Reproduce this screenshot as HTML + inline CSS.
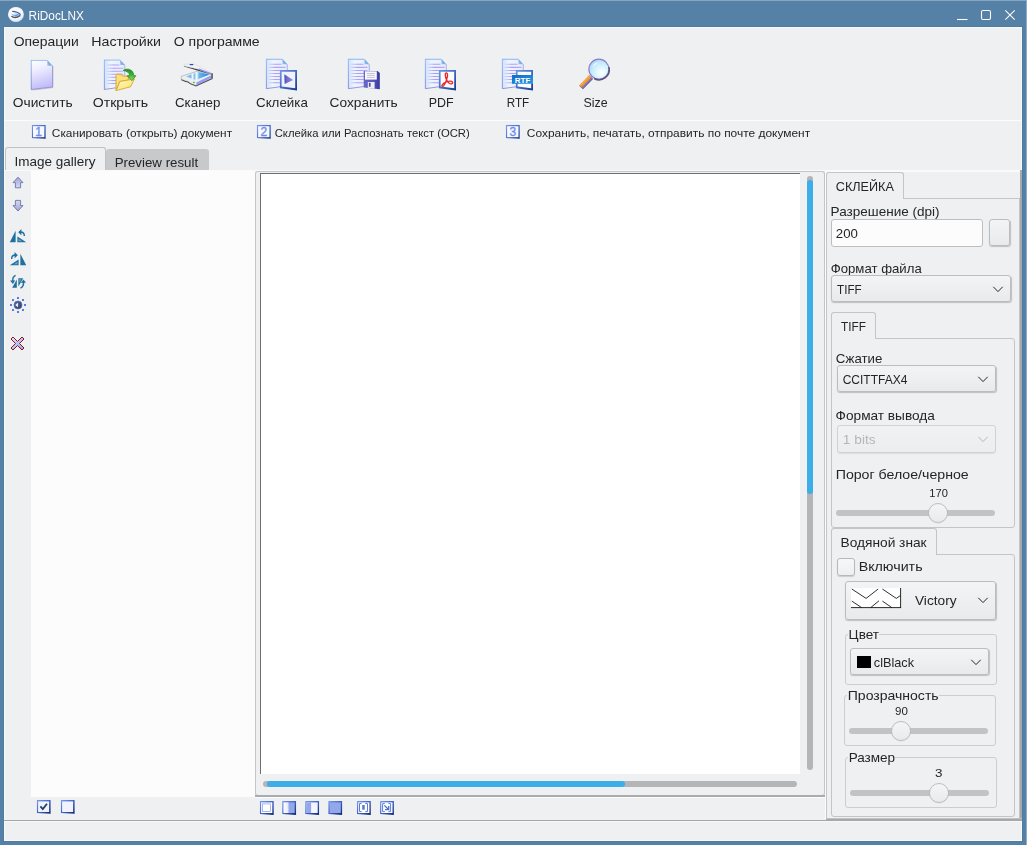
<!DOCTYPE html>
<html lang="ru">
<head>
<meta charset="utf-8">
<title>RiDocLNX</title>
<style>
*{box-sizing:border-box;margin:0;padding:0}
html,body{width:1027px;height:845px;overflow:hidden}
body{position:relative;background:#5581a6;font-family:"Liberation Sans","DejaVu Sans",sans-serif;color:#232627}
.a{position:absolute}
.t{position:absolute;white-space:nowrap;line-height:16px;height:16px;transform-origin:0 50%;color:#232627}
.m{font-size:13.33px}
.s{font-size:11px}
.bg{background:#eff0f1}
.fr{position:absolute;border:1px solid #c3c5c7;border-radius:3px}
.gb{position:absolute;border:1px solid #cbcdcf;border-radius:3px}
.cb{position:absolute;border:1px solid #bbbdbf;border-radius:3px;background:linear-gradient(#f3f4f5,#e9eaeb);box-shadow:.5px 1px 1px rgba(0,0,0,.2)}
.cb.dis{border-color:#d0d2d3;box-shadow:0 1px 1px rgba(0,0,0,.08);background:linear-gradient(#f1f2f3,#ecedee)}
.gr{position:absolute;height:6px;border-radius:3px;background:#c2c3c4}
.hd{position:absolute;width:20px;height:20px;border-radius:50%;border:1px solid #bcbec0;background:linear-gradient(#f4f5f6,#e9eaeb);box-shadow:0 .5px 1px rgba(0,0,0,.08)}
svg{position:absolute;overflow:visible}
</style>
</head>
<body>
<!-- window chrome -->
<div class="a" style="left:0;top:0;width:1027px;height:1px;background:#86a5c1"></div>
<div class="a" style="left:1026px;top:0;width:1px;height:845px;background:#8fadc7"></div>
<div class="a bg" style="left:4px;top:27px;width:1018px;height:814px;border:1px solid #f8f8f9;box-shadow:0 0 0 1px #4f7ca1"></div>
<!-- title buttons -->
<svg style="left:950px;top:4px" width="72" height="20" viewBox="950 4 72 20" fill="none" stroke="#fcfcfc" stroke-width="1.1">
<path d="M957 19.5H967.5"/>
<rect x="981.5" y="10.5" width="9" height="9" rx="1.5"/>
<path d="M1005.3 10.3L1014.7 19.7M1014.7 10.3L1005.3 19.7"/>
</svg>
<!-- separator under toolbar -->
<div class="a" style="left:4px;top:120px;width:1018px;height:1px;background:#fcfcfc"></div>
<!-- white line under tabs -->
<div class="a" style="left:4px;top:170px;width:1016px;height:1px;background:#fafafa"></div>
<div class="a" style="left:825px;top:171px;width:195px;height:1px;background:#fafafa"></div>
<!-- left tabs -->
<div class="a" style="left:106px;top:149px;width:103px;height:21px;background:#c8c9ca;border-radius:3px 3px 0 0"></div>
<div class="a bg" style="left:5px;top:147px;width:101px;height:23px;border:1px solid #c0c2c4;border-bottom:none;border-radius:3px 3px 0 0"></div>
<!-- gallery -->
<div class="a" style="left:31px;top:171px;width:224px;height:626px;background:#fcfcfc"></div>
<!-- viewer frame -->
<div class="a" style="left:255px;top:795px;width:570px;height:2px;background:#a9acaf"></div>
<div class="a" style="left:255px;top:797px;width:570px;height:1px;background:#fcfcfc"></div>
<div class="fr bg" style="left:255px;top:171px;width:570px;height:625px;border-bottom-color:#a9acaf"></div>
<div class="a" style="left:260px;top:173px;width:540px;height:601px;background:#fff;border-left:1px solid #6e6e6e;border-top:1px solid #6e6e6e"></div>
<!-- scrollbars -->
<div class="a" style="left:807px;top:176px;width:6px;height:594px;border-radius:3px;background:#b4b5b6"></div>
<div class="a" style="left:807px;top:180px;width:6px;height:314px;border-radius:3px;background:#3daee9"></div>
<div class="a" style="left:263px;top:781px;width:534px;height:6px;border-radius:3px;background:#b4b5b6"></div>
<div class="a" style="left:267px;top:781px;width:358px;height:6px;border-radius:3px;background:#3daee9"></div>
<!-- splitter + status bar -->
<div class="a" style="left:825px;top:171px;width:1px;height:648px;background:#fcfcfc"></div>
<div class="a" style="left:4px;top:820px;width:822px;height:1px;background:#a3a6a9"></div>
<div class="a" style="left:4px;top:821px;width:1018px;height:1px;background:#f8f8f9"></div>
<!-- right panel outer tab widget -->
<div class="a" style="left:826px;top:198px;width:196px;height:623px;border-left:1px solid #c3c5c7;border-top:1px solid #c3c5c7;border-radius:0 0 0 3px"></div>
<div class="a bg" style="left:826px;top:172px;width:78px;height:27px;border:1px solid #c3c5c7;border-bottom:none;border-radius:3px 3px 0 0"></div>
<div class="a" style="left:1019px;top:198px;width:1px;height:621px;background:#c3c5c7"></div>
<div class="a" style="left:1020px;top:170px;width:2px;height:651px;background:#a6a8ac"></div>
<div class="a" style="left:827px;top:818px;width:195px;height:1px;background:#c0c2c5"></div>
<div class="a" style="left:826px;top:819px;width:196px;height:2px;background:#a6a8ac"></div>
<!-- resolution -->
<div class="a" style="left:831px;top:219px;width:152px;height:28px;border:1px solid #bcbec0;border-radius:3px;background:#fcfcfc"></div>
<div class="cb" style="left:989px;top:219px;width:21px;height:27px"></div>
<!-- format combobox -->
<div class="cb" style="left:831px;top:275px;width:180px;height:27px"></div>
<svg style="left:993px;top:286px" width="10" height="7" viewBox="0 0 10 7" fill="none" stroke="#232627" stroke-width="1"><path d="M0.3 0.8L5 5.6L9.7 0.8"/></svg>
<!-- TIFF tab + pane -->
<div class="fr" style="left:831px;top:338px;width:184px;height:190px;border-radius:0 3px 3px 3px"></div>
<div class="a bg" style="left:831px;top:312px;width:45px;height:27px;border:1px solid #c3c5c7;border-bottom:none;border-radius:3px 3px 0 0"></div>
<div class="cb" style="left:837px;top:365px;width:159px;height:27px"></div>
<svg style="left:978px;top:376px" width="10" height="7" viewBox="0 0 10 7" fill="none" stroke="#232627" stroke-width="1"><path d="M0.3 0.8L5 5.6L9.7 0.8"/></svg>
<div class="cb dis" style="left:837px;top:425px;width:159px;height:28px"></div>
<svg style="left:978px;top:436px" width="10" height="7" viewBox="0 0 10 7" fill="none" stroke="#b4b6b7" stroke-width="1"><path d="M0.3 0.8L5 5.6L9.7 0.8"/></svg>
<div class="gr" style="left:836px;top:510px;width:159px"></div>
<div class="hd" style="left:928px;top:503px"></div>
<!-- watermark tab + pane -->
<div class="fr" style="left:831px;top:554px;width:184px;height:263px;border-radius:0 3px 3px 3px"></div>
<div class="a bg" style="left:831px;top:528px;width:106px;height:27px;border:1px solid #c3c5c7;border-bottom:none;border-radius:3px 3px 0 0"></div>
<div class="a" style="left:837px;top:558px;width:18px;height:18px;border:1px solid #b6b8ba;border-radius:3px;background:linear-gradient(#f6f7f7,#eeeff0);box-shadow:0 1px 1px rgba(0,0,0,.15)"></div>
<div class="cb" style="left:845px;top:581px;width:151px;height:39px"></div>
<svg style="left:851px;top:588px" width="51" height="20" viewBox="0 0 51 20"><rect x="0" y="0" width="50" height="19.8" fill="#fff"/><path d="M.8 1L15.1 10.4L27.2 1M.8 13.1L10.6 19.6M19.7 19.6L28 12.8M31.4 1L45.3 10.4L49.2 7.7M31.4 13.1L40.8 19.6" fill="none" stroke="#1a1a1a" stroke-width="0.9"/><path d="M49.6 0V20M0 19.6H50" fill="none" stroke="#111" stroke-width="0.9"/></svg>
<svg style="left:978px;top:597px" width="10" height="7" viewBox="0 0 10 7" fill="none" stroke="#232627" stroke-width="1"><path d="M0.3 0.8L5 5.6L9.7 0.8"/></svg>
<!-- colour group -->
<div class="gb" style="left:845px;top:634px;width:152px;height:51px"></div>
<div class="a bg" style="left:848px;top:630px;width:31px;height:10px"></div>
<div class="cb" style="left:850px;top:648px;width:139px;height:27px"></div>
<div class="a" style="left:857px;top:656px;width:14px;height:12px;background:#000"></div>
<svg style="left:971px;top:659px" width="10" height="7" viewBox="0 0 10 7" fill="none" stroke="#232627" stroke-width="1"><path d="M0.3 0.8L5 5.6L9.7 0.8"/></svg>
<!-- transparency group -->
<div class="gb" style="left:844px;top:695px;width:152px;height:51px"></div>
<div class="a bg" style="left:847px;top:691px;width:92px;height:10px"></div>
<div class="gr" style="left:849px;top:728px;width:139px"></div>
<div class="hd" style="left:891px;top:721px"></div>
<!-- size group -->
<div class="gb" style="left:845px;top:757px;width:152px;height:51px"></div>
<div class="a bg" style="left:848px;top:753px;width:47px;height:10px"></div>
<div class="gr" style="left:850px;top:790px;width:139px"></div>
<div class="hd" style="left:929px;top:783px"></div>
<!-- icon overlay (page coordinates) -->
<svg style="left:0;top:0" width="1027" height="845" viewBox="0 0 1027 845">
<defs>
<linearGradient id="gDoc" x1="0" y1="0" x2=".25" y2="1"><stop offset="0" stop-color="#ffffff"/><stop offset=".35" stop-color="#efeefe"/><stop offset="1" stop-color="#c2bdfa"/></linearGradient>
<linearGradient id="gEdge" x1="0" y1="0" x2="0" y2="1"><stop offset="0" stop-color="#8db6f2"/><stop offset="1" stop-color="#7a84d6"/></linearGradient>
<linearGradient id="gLine" gradientUnits="userSpaceOnUse" x1="2" y1="0" x2="20" y2="0"><stop offset="0" stop-color="#dde3ff"/><stop offset=".45" stop-color="#ab9cf8"/><stop offset="1" stop-color="#b8acf9"/></linearGradient>
<linearGradient id="gDocL" x1="0" y1="0" x2="1" y2="0"><stop offset="0" stop-color="#cfe2fc"/><stop offset=".3" stop-color="#eef5ff"/><stop offset="1" stop-color="#e6ebfd"/></linearGradient>
<linearGradient id="gFold" x1="0" y1="1" x2="1" y2="0"><stop offset="0" stop-color="#9cc6f2"/><stop offset="1" stop-color="#3f86d8"/></linearGradient>
<linearGradient id="gFolder" x1="0" y1="0" x2="1" y2="1"><stop offset="0" stop-color="#fff8c8"/><stop offset=".6" stop-color="#fdea8c"/><stop offset="1" stop-color="#f6cf55"/></linearGradient>
<linearGradient id="gGreen" x1="0" y1="0" x2="0" y2="1"><stop offset="0" stop-color="#23902a"/><stop offset=".5" stop-color="#3fb23a"/><stop offset="1" stop-color="#8dea6a"/></linearGradient>
<linearGradient id="gBox" x1="0" y1="0" x2="1" y2="1"><stop offset="0" stop-color="#f4f6ff"/><stop offset="1" stop-color="#c9d2f5"/></linearGradient>
<linearGradient id="gFlop" x1="0" y1="0" x2="1" y2="0"><stop offset="0" stop-color="#6a6acc"/><stop offset=".6" stop-color="#5555bb"/><stop offset="1" stop-color="#36369c"/></linearGradient>
<linearGradient id="gRtf" x1="0" y1="0" x2="1" y2="1"><stop offset="0" stop-color="#0f6cc4"/><stop offset="1" stop-color="#2a9ade"/></linearGradient>
<linearGradient id="gPlay" x1="0" y1="0" x2="1" y2="0"><stop offset="0" stop-color="#4848a8"/><stop offset=".35" stop-color="#6f6fd6"/><stop offset="1" stop-color="#8d8de6"/></linearGradient>
<linearGradient id="gBtn2" x1="0" y1="0" x2="1" y2="1"><stop offset="0" stop-color="#6d98e2"/><stop offset=".5" stop-color="#3f6cc4"/><stop offset="1" stop-color="#17388a"/></linearGradient>
<radialGradient id="gGlass" cx=".64" cy=".68" r=".75"><stop offset="0" stop-color="#ffffff"/><stop offset=".3" stop-color="#e4f9ff"/><stop offset=".7" stop-color="#c4e8fd"/><stop offset="1" stop-color="#a4d2f8"/></radialGradient>
<linearGradient id="gScan" x1="0" y1="0" x2="1" y2="0"><stop offset="0" stop-color="#9fd0f6"/><stop offset=".2" stop-color="#6fb8f0"/><stop offset=".28" stop-color="#f4faff"/><stop offset=".36" stop-color="#7cc0f2"/><stop offset=".46" stop-color="#ffffff"/><stop offset=".56" stop-color="#6ab6f0"/><stop offset="1" stop-color="#1a84e0"/></linearGradient>
<linearGradient id="gBtn" x1="0" y1="0" x2="1" y2="1"><stop offset="0" stop-color="#7d9cec"/><stop offset=".45" stop-color="#4468cc"/><stop offset="1" stop-color="#0e2870"/></linearGradient>
<linearGradient id="gArr" x1="0" y1="0" x2="0" y2="1"><stop offset="0" stop-color="#9ea4da"/><stop offset="1" stop-color="#d6d9f3"/></linearGradient>
<linearGradient id="gArr2" x1="0" y1="0" x2="0" y2="1"><stop offset="0" stop-color="#d6d9f3"/><stop offset="1" stop-color="#9ea4da"/></linearGradient>
<linearGradient id="gX" x1="0" y1="0" x2="1" y2="1"><stop offset="0" stop-color="#e8ebff"/><stop offset="1" stop-color="#8f9df0"/></linearGradient>
<linearGradient id="gHalfL" x1="0" y1="0" x2="1" y2="0"><stop offset="0" stop-color="#ffffff"/><stop offset="1" stop-color="#e4e8fb"/></linearGradient>
<radialGradient id="gSun" cx=".4" cy=".4" r=".7"><stop offset="0" stop-color="#6272a2"/><stop offset="1" stop-color="#2b3358"/></radialGradient>
<radialGradient id="gBall" cx=".45" cy=".35" r=".75"><stop offset="0" stop-color="#ffffff"/><stop offset=".6" stop-color="#f2f8ff"/><stop offset=".85" stop-color="#cfe2fb"/><stop offset="1" stop-color="#b9c6da"/></radialGradient>
<symbol id="docB" viewBox="0 0 23 31" preserveAspectRatio="none">
 <path d="M22.6 6.4V27.9L1 30.6" fill="none" stroke="#9a9aa6" stroke-width="1" opacity=".55"/>
 <path d="M.6 .5H16.9L22.1 5.9V27.3L.6 29.9Z" fill="url(#gDoc)"/>
 <path d="M.6 29.9V.5H16.9" fill="none" stroke="url(#gEdge)" stroke-width="1.1"/>
 <path d="M22.1 5.9V27.3L.6 29.9" fill="none" stroke="#8f8fd2" stroke-width=".9"/>
 <path d="M16.9 .5L22.1 5.9H16.9Z" fill="url(#gFold)"/>
</symbol>
<symbol id="docL" viewBox="0 0 22 30" preserveAspectRatio="none">
 <path d="M.5 .5H16.8L21.6 5.5V26.6L.5 29.5Z" fill="url(#gDocL)"/>
 <path d="M2.6 5.6H15.9M2.6 8.6H19.9M2.6 11.6H19.9M2.6 14.6H19.9M2.6 17.6H19.9M2.6 20.6H19.9M2.6 23.6H19.9" stroke="url(#gLine)" stroke-width="1"/>
 <path d="M.5 29.5V.5H16.8" fill="none" stroke="url(#gEdge)" stroke-width="1.1"/>
 <path d="M21.6 5.5V26.6L.5 29.5" fill="none" stroke="#8f90d0" stroke-width=".9"/>
 <path d="M16.8 .5L21.6 5.5H16.8Z" fill="url(#gFold)"/>
</symbol>
<symbol id="sq" viewBox="0 0 14.5 14.5">
 <path d="M.3 .3H14.2V14.2L.3 13.4Z" fill="url(#gBtn)"/>
</symbol>
</defs>
<!-- app icon -->
<ellipse cx="16.2" cy="14.7" rx="8" ry="7.6" fill="#8a8fa0" opacity=".8"/>
<ellipse cx="15.9" cy="14.4" rx="7.9" ry="7.5" fill="url(#gBall)"/>
<path d="M12.2 11.3C15 11.4 18.6 12.6 20.6 14.6" fill="none" stroke="#5a5674" stroke-width="1.3"/>
<path d="M11.2 14.8L15.6 13.4L20.2 14.8L15.4 16.6Z" fill="#5b9cf0"/>
<path d="M12.6 14.8L15.6 13.8L17 14.2L13.8 15.4Z" fill="#d8ecff"/>
<path d="M11.4 16.2C13.4 17.8 17 17.8 20.4 15.4" fill="none" stroke="#55555e" stroke-width="1.3"/>
<!-- 1 clear -->
<use href="#docB" x="30.5" y="59.8" width="23" height="30.8"/>
<!-- 2 open -->
<use href="#docL" x="103.7" y="59.4" width="21.7" height="30.6"/>
<path d="M116 90.6V75.2C116 74.5 116.5 74.2 117.1 74.2H121.2L122.4 76.1H128.4V80L119.7 81.5Z" fill="#fbe07c" stroke="#d9a326" stroke-width=".9" stroke-linejoin="round"/>
<path d="M116.3 90.5L119.8 81.5L134.5 78.9L130.5 86.8Z" fill="url(#gFolder)" stroke="#dba72a" stroke-width=".9" stroke-linejoin="round"/>
<path d="M123.2 70.5C126 68.5 130.6 68.5 132.7 72C133.4 73.2 133.7 74.4 133.8 75.7H135.9L131.9 80.7L127.1 75.7H129.7C129.5 72.7 126.9 71 123.2 70.5Z" fill="url(#gGreen)" stroke="#1c7f1c" stroke-width=".7" stroke-linejoin="round"/>
<!-- 3 scanner -->
<path d="M184 66.6L198.9 71.1L210.4 74.8L211.6 73.4L198.9 69.4L184 65.6Z" fill="#3a3c44"/>
<path d="M184 64.3L193.8 63.8L211.4 72.9L210.4 73.8L198.9 69.2L184 66Z" fill="#f1f2f4" stroke="#c9cbd2" stroke-width=".4"/>
<path d="M198.9 68.4L211.2 73.1V74.4L198.9 69.9Z" fill="#8e90ee"/>
<path d="M189.2 64.1L193.6 63.9L192.8 65.3L190.4 65.2Z" fill="#3f43b4"/>
<path d="M181.3 76.3L197.4 71.2L211.6 74.6V77.6L196 85.6L190.2 83.2C188.8 81.6 187.4 81 185.6 80.9L181.3 79.3Z" fill="#eceef0" stroke="#8d9096" stroke-width=".5"/>
<path d="M185.8 76.5L198.1 71.9L209.5 74.5L195.9 80Z" fill="url(#gScan)"/>
<path d="M196.4 82.4L211.4 75.3V77.6L196.4 85.2Z" fill="#9798f6"/>
<path d="M211.4 73.2H212.8V77.9L211.4 78.5Z" fill="#4a4c55"/>
<path d="M181.3 79.2L185.6 80.9C187.4 81 188.8 81.6 190.2 83.2L196 85.6L212.6 77.8V78.9L196 86.6L189.8 84.1C188.6 82.6 187.4 82 185.4 81.9L181.3 80.3Z" fill="#4a4c55"/>
<rect x="193" y="81.8" width="1.8" height="1.3" fill="#4fc62a"/>
<!-- 4 glue -->
<use href="#docL" x="265.7" y="58.6" width="22" height="30.6"/>
<path d="M279.9 70H297V90.6L279.9 88.2Z" fill="url(#gBtn2)"/>
<path d="M281.6 71.7H295.2V88.3L281.6 86.6Z" fill="#f1f1fc"/>
<path d="M284.3 74.2L293.1 80.1L284.7 84.1Z" fill="url(#gPlay)"/>
<!-- 5 save -->
<use href="#docL" x="347.7" y="58.6" width="22" height="30.6"/>
<path d="M363.7 71.1H377.6L379.8 73V89.3L363.7 87.6Z" fill="url(#gFlop)"/>
<path d="M365 71.3H376.8V79.6H365Z" fill="#f8f8fb"/>
<path d="M367 73.5H374.8M367 75.4H374.8M367 77.4H374.8" stroke="#b9b9c4" stroke-width=".8"/>
<path d="M367.8 82H374.6V88.8L367.8 88.1Z" fill="#ececf2"/>
<path d="M368.9 82.8H370.6V86.4L368.9 86.9Z" fill="#4d4da6"/>
<!-- 6 pdf -->
<use href="#docL" x="424.7" y="58.6" width="22" height="30.6"/>
<path d="M438.9 70H456V90.6L438.9 88.2Z" fill="url(#gBtn2)"/>
<path d="M440.6 71.7H454.2V88.3L440.6 86.6Z" fill="#fbfbff"/>
<path d="M446.3 72.8C444.7 72.8 445.2 77 446.6 80C448 83 450.4 84.5 452 83.7C453.4 82.9 452.4 81 450 81.2C447 81.4 443.8 82.8 442.4 84.7C441.2 86.3 442.6 87 443.8 85.6C445.4 83.6 446.8 79.6 447.4 76.6C447.8 74.3 447.4 72.8 446.3 72.8Z" fill="none" stroke="#ea2424" stroke-width="1.35" stroke-linejoin="round"/>
<!-- 7 rtf -->
<use href="#docL" x="501.7" y="58.6" width="22" height="30.6"/>
<path d="M515.9 70H533V90.6L515.9 88.2Z" fill="url(#gBtn2)"/>
<path d="M517.6 71.7H531.2V88.3L517.6 86.6Z" fill="#fbfbff"/>
<rect x="512" y="75" width="21" height="8.8" fill="url(#gRtf)"/>
<text x="514.7" y="82.7" font-family="Liberation Sans,sans-serif" font-size="8" font-weight="700" fill="#fff" textLength="15.6" lengthAdjust="spacingAndGlyphs">RTF</text>
<!-- 8 size -->
<path d="M591.1 77.1L581.1 87.5" stroke="#5c5572" stroke-width="5.2"/>
<path d="M591.8 77.7L582.0 87.8" stroke="#8a78d0" stroke-width="1.9"/>
<path d="M590.2 76.3L580.6 86.3" stroke="#f5972a" stroke-width="3"/>
<path d="M589.7 75.7L580.1 85.7" stroke="#ffb04a" stroke-width="1.1"/>
<circle cx="598.9" cy="69.2" r="10" fill="url(#gGlass)" stroke="#8a7fcc" stroke-width="1.2"/>
<path d="M609.1 67.6A10.3 10.3 0 0 1 594.6 78.8" fill="none" stroke="#5e5279" stroke-width="1.5" stroke-linecap="round"/>
<path d="M592.4 67.4C593 64.6 595.4 62.6 598.4 62.2C596.6 63.6 594.4 65 592.4 67.4Z" fill="#fff" opacity=".95"/>
<!-- step number icons -->
<g font-family="Liberation Sans,sans-serif" font-size="12" fill="#6f8de8" stroke="#6f8de8" stroke-width=".35">
<use href="#sq" x="31.5" y="124.8" width="14.6" height="14.2"/><rect x="33" y="126.2" width="11.4" height="11" fill="#f6f8ff" stroke="none"/><text x="35.3" y="136.3">1</text>
<use href="#sq" x="256.6" y="124.8" width="14.6" height="14.2"/><rect x="258.1" y="126.2" width="11.4" height="11" fill="#f6f8ff" stroke="none"/><text x="260.4" y="136.3">2</text>
<use href="#sq" x="505.6" y="124.8" width="14.6" height="14.2"/><rect x="507.1" y="126.2" width="11.4" height="11" fill="#f6f8ff" stroke="none"/><text x="509.4" y="136.3">3</text>
</g>
<!-- left strip: up / down -->
<path d="M18 177.2L23 182.6H20.6V187.8H15.4V182.6H13Z" fill="url(#gArr)" stroke="#62679c" stroke-width=".8" stroke-linejoin="round"/>
<path d="M18 211L23 205.6H20.6V200.4H15.4V205.6H13Z" fill="url(#gArr2)" stroke="#62679c" stroke-width=".8" stroke-linejoin="round"/>
<!-- rotate left -->
<g fill="#1f6f9f" stroke="none">
<path d="M9.8 242.2L15.6 230.8V242.2Z"/>
<path d="M17.4 242.2V236.6L26.2 242.2Z"/><path d="M18.5 241.2H22.2L18.5 238.8Z" fill="#6ea6ca"/>
<path d="M18.2 232.3L21.4 229V231.2C23.8 231.4 25.2 233.2 25 236H23.6C23.7 234 22.9 233 21.4 232.9V235.2Z"/>
<!-- rotate right -->
<path d="M26.2 265.2L20.4 253.8V265.2Z"/>
<path d="M18.6 265.2V259.6L9.8 265.2Z"/><path d="M17.5 264.2H13.8L17.5 261.8Z" fill="#6ea6ca"/>
<path d="M17.8 255.3L14.6 252V254.2C12.2 254.4 10.8 256.2 11 259H12.4C12.3 257 13.1 256 14.6 255.9V258.2Z"/>
<!-- rotate 180 -->
<path d="M12.2 287.8L16.8 279.4V287.8Z"/>
<path d="M18.4 278.2H23.2L18.4 286.4Z"/>
<path d="M19.3 279.2H21.4L19.3 282.8Z" fill="#6ea6ca"/>
<path d="M10 280.6L12.9 283.9L15.2 280.2L13.5 280.4C13.3 278.3 14.1 276.7 15.9 275.9L15.3 274.8C12.9 275.8 11.9 277.8 12.1 280.5Z"/>
<path d="M26 282.6L23.4 279.6L20.8 282.9L22.7 282.8C22.9 285 22 286.7 20.2 287.6L20.8 288.7C23.4 287.6 24.4 285.4 24.2 282.7Z"/>
</g>
<!-- brightness -->
<circle cx="18" cy="305" r="4" fill="url(#gSun)" stroke="#5676cc" stroke-width=".7"/>
<path d="M15.3 305L18 302.8V307.2Z" fill="#eef1fa"/>
<g fill="#5b7ad8"><rect x="17" y="297" width="2" height="2"/><rect x="17" y="311" width="2" height="2"/><rect x="10" y="304" width="2" height="2"/><rect x="24" y="304" width="2" height="2"/><rect x="12" y="299" width="2" height="2"/><rect x="22" y="299" width="2" height="2"/><rect x="12" y="309" width="2" height="2"/><rect x="22" y="309" width="2" height="2"/></g>
<!-- delete X -->
<path d="M13 337L17.5 341.5L22 337L24 339L19.5 343.5L24 348L22 350L17.5 345.5L13 350L11 348L15.5 343.5L11 339Z" fill="url(#gX)" stroke="#8e1616" stroke-width="1" stroke-linejoin="miter"/>
<!-- bottom-left checkboxes -->
<use href="#sq" x="36.5" y="799.8" width="14.5" height="14.3"/><rect x="38.1" y="801.4" width="11" height="10.6" fill="#f0f2fd"/>
<path d="M40.4 806.4L42.8 809.1L47 803.7" fill="none" stroke="#1f3d72" stroke-width="1.8"/>
<use href="#sq" x="60.5" y="799.8" width="14.5" height="14.3"/><rect x="62.1" y="801.4" width="11" height="10.6" fill="#f0f2fd"/>
<!-- bottom view icons -->
<use href="#sq" x="259.5" y="800.8" width="14.6" height="14.4"/><rect x="261.1" y="802.4" width="11.2" height="10.6" fill="#fff"/><rect x="262.6" y="803.9" width="8" height="7.6" fill="#fff" stroke="#7f97ea" stroke-width=".7"/>
<use href="#sq" x="281.9" y="800.8" width="14.6" height="14.4"/><rect x="283.5" y="802.4" width="11.2" height="10.6" fill="#92a8ea"/><rect x="283.5" y="802.4" width="5" height="10.6" fill="url(#gHalfL)"/>
<use href="#sq" x="304.9" y="800.8" width="14.6" height="14.4"/><rect x="306.5" y="802.4" width="11.2" height="10.6" fill="#f4f5ff"/><rect x="306.5" y="802.4" width="4.6" height="10.6" fill="#92a8ea"/>
<use href="#sq" x="328" y="800.8" width="14.6" height="14.4"/><rect x="329.6" y="802.4" width="11.2" height="10.6" fill="#92a8ea"/>
<use href="#sq" x="356.6" y="800.8" width="14.6" height="14.4"/><rect x="358.2" y="802.4" width="11.2" height="10.6" fill="#fff"/><path d="M361.7 803.6H359.5V811.6H361.7M365.3 803.6H367.5V811.6H365.3" fill="none" stroke="#5b7be0" stroke-width="1"/><rect x="362.2" y="805" width="2.5" height="4.7" fill="#5a7acc"/>
<use href="#sq" x="379.7" y="800.8" width="14.6" height="14.4"/><rect x="381.3" y="802.4" width="11.2" height="10.6" fill="#fff"/><path d="M384.8 803.6H382.6V811.6H384.8M388.4 803.6H390.6V811.6H388.4" fill="none" stroke="#5b7be0" stroke-width="1"/><path d="M384.3 805.4L388.3 809.2M388.7 806V809.6H385.1" fill="none" stroke="#4a6fd0" stroke-width="1.3"/>
</svg>
<!-- text -->
<div class="a" style="left:0;top:0;width:1027px;height:845px;will-change:transform">
<span class="t m" style="left:28px;top:8px;transform:translateX(0.61px) scaleX(0.8872);color:#fcfcfc">RiDocLNX</span>
<span class="t m" style="left:13px;top:34px;transform:translateX(0.72px) scaleX(1.0453)">Операции</span>
<span class="t m" style="left:91px;top:34px;transform:translateX(0.26px) scaleX(1.0666)">Настройки</span>
<span class="t m" style="left:173px;top:34px;transform:translateX(0.72px) scaleX(1.0539)">О программе</span>
<span class="t m" style="left:12px;top:95px;transform:translateX(0.75px) scaleX(1.0327)">Очистить</span>
<span class="t m" style="left:92px;top:95px;transform:translateX(0.71px) scaleX(1.0573)">Открыть</span>
<span class="t m" style="left:174px;top:95px;transform:translateX(1.00px) scaleX(0.9985)">Сканер</span>
<span class="t m" style="left:256px;top:95px;transform:translateX(0.00px) scaleX(1.0012)">Склейка</span>
<span class="t m" style="left:329px;top:95px;transform:translateX(0.62px) scaleX(1.0285)">Сохранить</span>
<span class="t m" style="left:428px;top:95px;transform:translateX(0.74px) scaleX(0.9337)">PDF</span>
<span class="t m" style="left:506px;top:95px;transform:translateX(0.69px) scaleX(0.8752)">RTF</span>
<span class="t m" style="left:583px;top:95px;transform:translateX(0.42px) scaleX(0.9311)">Size</span>
<span class="t s" style="left:51px;top:125px;transform:translateX(0.84px) scaleX(1.0758)">Сканировать (открыть) документ</span>
<span class="t s" style="left:274px;top:125px;transform:translateX(0.69px) scaleX(1.0254)">Склейка или Распознать текст (OCR)</span>
<span class="t s" style="left:526px;top:125px;transform:translateX(0.83px) scaleX(1.0852)">Сохранить, печатать, отправить по почте документ</span>
<span class="t m" style="left:14px;top:154px;transform:translateX(0.44px) scaleX(1.0135)">Image gallery</span>
<span class="t m" style="left:114px;top:155px;transform:translateX(0.69px) scaleX(0.9968)">Preview result</span>
<span class="t m" style="left:835px;top:179px;transform:translateX(0.79px) scaleX(0.9479)">СКЛЕЙКА</span>
<span class="t m" style="left:830px;top:204px;transform:translateX(0.62px) scaleX(1.0149)">Разрешение (dpi)</span>
<span class="t m" style="left:835px;top:226px;transform:translateX(0.83px) scaleX(0.9931)">200</span>
<span class="t m" style="left:830px;top:261px;transform:translateX(0.68px) scaleX(0.9894);height:14px;overflow:hidden">Формат файла</span>
<span class="t m" style="left:837px;top:282px;transform:translateX(0.05px) scaleX(0.8729)">TIFF</span>
<span class="t m" style="left:841px;top:319px;transform:translateX(0.04px) scaleX(0.8869)">TIFF</span>
<span class="t m" style="left:835px;top:351px;transform:translateX(0.69px) scaleX(0.9943)">Сжатие</span>
<span class="t m" style="left:842px;top:372px;transform:translateX(0.65px) scaleX(0.9025)">CCITTFAX4</span>
<span class="t m" style="left:835px;top:408px;transform:translateX(0.61px) scaleX(1.0233)">Формат вывода</span>
<span class="t m" style="left:842px;top:432px;transform:translateX(0.82px) scaleX(1.0308);color:#b4b6b7">1 bits</span>
<span class="t m" style="left:835px;top:467px;transform:translateX(0.71px) scaleX(1.0617)">Порог белое/черное</span>
<span class="t s" style="left:929px;top:485px;transform:translateX(0.32px) scaleX(1.0106)">170</span>
<span class="t m" style="left:840px;top:535px;transform:translateX(0.56px) scaleX(1.0286)">Водяной знак</span>
<span class="t m" style="left:858px;top:559px;transform:translateX(0.63px) scaleX(1.0696)">Включить</span>
<span class="t m" style="left:914px;top:593px;transform:translateX(0.99px) scaleX(1.0270)">Victory</span>
<span class="t m" style="left:848px;top:627px;transform:translateX(0.62px) scaleX(1.0170)">Цвет</span>
<span class="t m" style="left:873px;top:655px;transform:translateX(0.87px) scaleX(0.9517)">clBlack</span>
<span class="t m" style="left:847px;top:688px;transform:translateX(0.75px) scaleX(1.0525)">Прозрачность</span>
<span class="t s" style="left:895px;top:703px;transform:translateX(0.12px) scaleX(1.0485)">90</span>
<span class="t m" style="left:848px;top:750px;transform:translateX(0.63px) scaleX(1.0146)">Размер</span>
<span class="t s" style="left:935px;top:765px;transform:translateX(0.07px) scaleX(1.2211)">3</span>
</div>
</body>
</html>
